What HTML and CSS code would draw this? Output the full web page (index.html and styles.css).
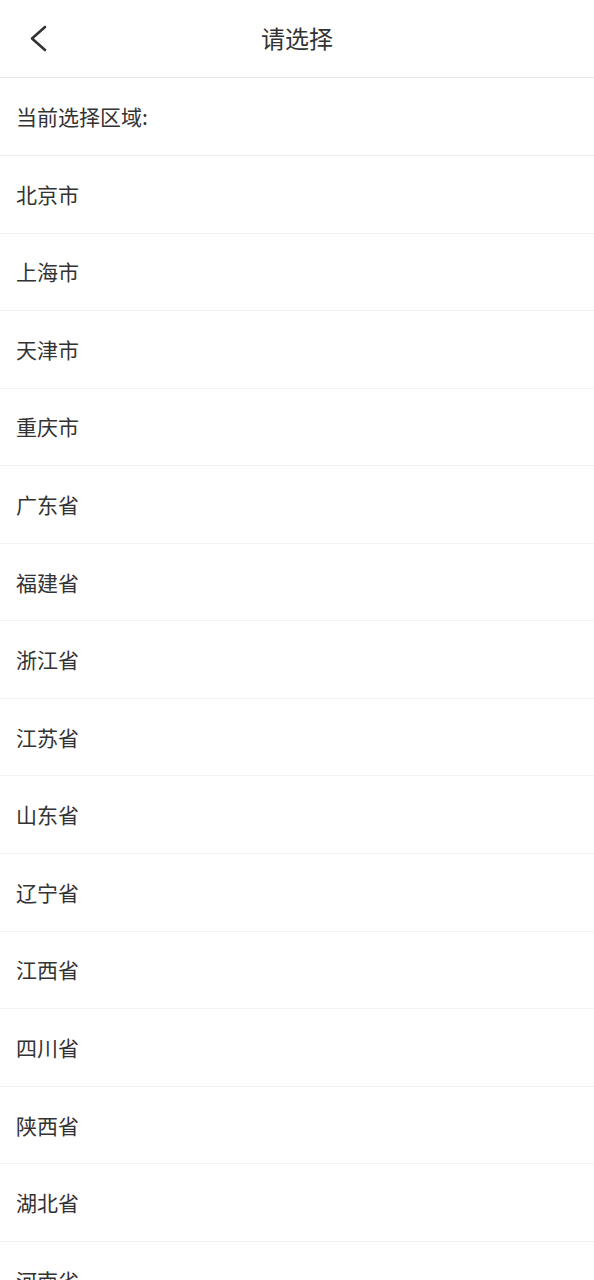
FILE: index.html
```html
<!DOCTYPE html>
<html lang="zh">
<head>
<meta charset="utf-8">
<link rel="stylesheet" href="styles.css">
</head>
<body>
<header class="topbar">
  <button class="back" aria-label="返回">
    <svg width="24" height="30" viewBox="0 0 24 30"><path d="M19 3 L6 14.5 L19 26" fill="none" stroke="#333" stroke-width="2.6" stroke-linecap="round" stroke-linejoin="round"/></svg>
  </button>
  <h1 class="title">请选择</h1>
</header>
<div class="current">当前选择区域:</div>
<ul class="list">
  <li class="item">北京市</li>
  <li class="item">上海市</li>
  <li class="item">天津市</li>
  <li class="item">重庆市</li>
  <li class="item">广东省</li>
  <li class="item">福建省</li>
  <li class="item">浙江省</li>
  <li class="item">江苏省</li>
  <li class="item">山东省</li>
  <li class="item">辽宁省</li>
  <li class="item">江西省</li>
  <li class="item">四川省</li>
  <li class="item">陕西省</li>
  <li class="item">湖北省</li>
  <li class="item">河南省</li>
</ul>
</body>
</html>
```
FILE: styles.css
```css
* { box-sizing: border-box; }
html, body { margin: 0; padding: 0; background: #fff; }
body {
  font-family: "Noto Sans CJK SC", "Noto Sans", sans-serif;
  color: #333;
  overflow: hidden;
}
.topbar {
  height: 77.6px;
  border-bottom: 1px solid #e6e6e6;
  display: flex;
  align-items: center;
  justify-content: center;
  position: relative;
}
.back {
  position: absolute;
  left: 26px;
  top: 24px;
  padding: 0;
  border: 0;
  background: none;
  display: flex;
}
.title {
  margin: 0;
  font-size: 24px;
  font-weight: 400;
  color: #333;
  line-height: 1;
}
.current, .item {
  height: 77.57px;
  border-bottom: 1px solid #ececec;
  display: flex;
  align-items: center;
  padding-left: 16px;
  font-size: 21px;
  line-height: 1;
}
.current { height: 78.4px; }
.list { list-style: none; margin: 0; padding: 0; }
.item { border-bottom-color: #f2f2f2; }
```
